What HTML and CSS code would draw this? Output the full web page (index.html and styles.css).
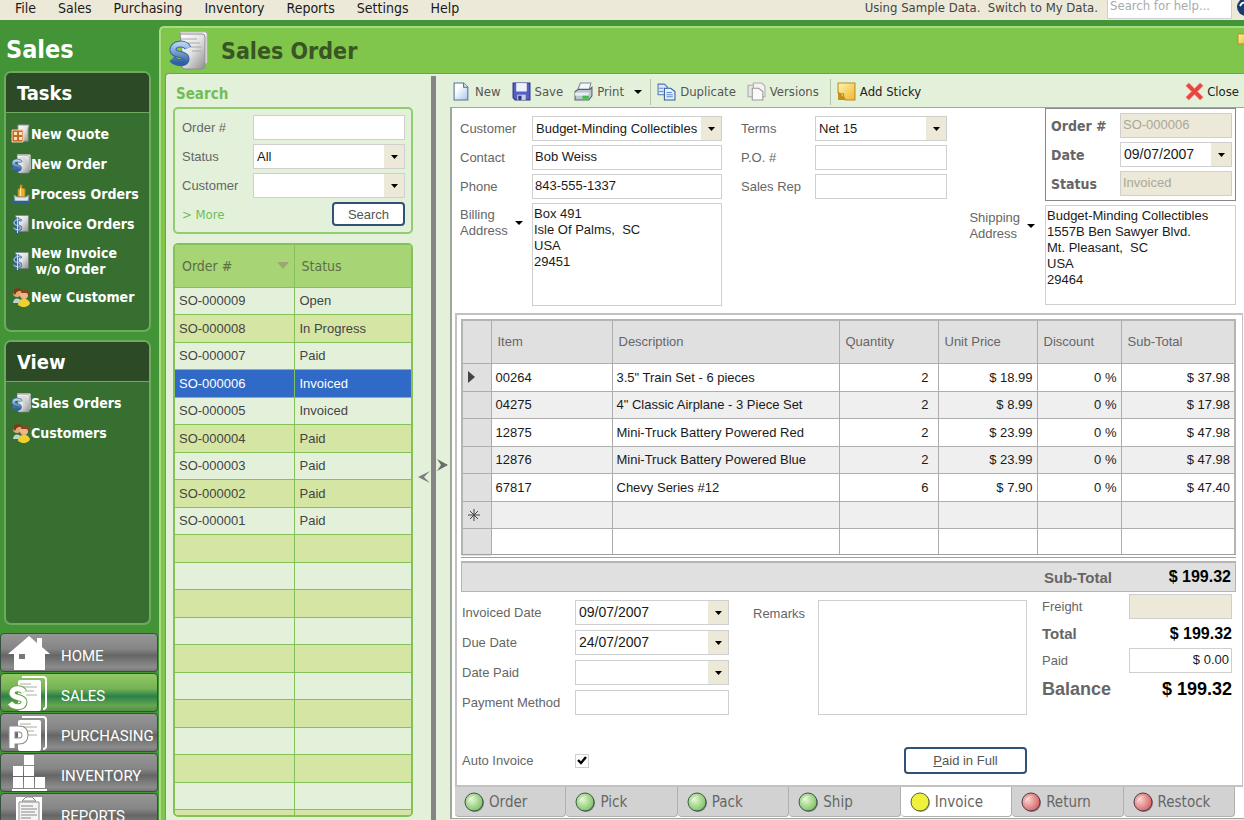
FILE: index.html
```html
<!DOCTYPE html>
<html lang="en">
    <head>
        <meta charset="utf-8">
        <title>Sales Order</title>
        <link rel="stylesheet" href="styles.css">
    </head>
    <body>
        <!-- Shared icons -->
        <svg class="defs" width="0" height="0">
            <defs>
                <linearGradient id="gPaper" x1="0" y1="0" x2="1" y2="1">
                    <stop offset="0" stop-color="#ffffff"/><stop offset="0.5" stop-color="#e2e2e2"/><stop offset="1" stop-color="#8d8d8d"/>
                </linearGradient>
                <linearGradient id="gBlue" x1="0" y1="0" x2="0" y2="1">
                    <stop offset="0" stop-color="#b4d0ee"/><stop offset="1" stop-color="#2d5fa4"/>
                </linearGradient>
                <linearGradient id="gSheet" x1="0" y1="0" x2="1" y2="1">
                    <stop offset="0.3" stop-color="#ffffff"/><stop offset="1" stop-color="#a9c4e8"/>
                </linearGradient>
                <linearGradient id="gSticky" x1="0" y1="0" x2="1" y2="1">
                    <stop offset="0" stop-color="#fff6b0"/><stop offset="1" stop-color="#eeb62c"/>
                </linearGradient>
                <radialGradient id="gGreen" cx="0.4" cy="0.4" r="0.6">
                    <stop offset="0" stop-color="#dff5cf"/><stop offset="1" stop-color="#83c468"/>
                </radialGradient>
                <radialGradient id="gRed" cx="0.35" cy="0.4" r="0.65">
                    <stop offset="0" stop-color="#f8cfcf"/><stop offset="1" stop-color="#d86565"/>
                </radialGradient>
                <symbol id="order" viewBox="0 0 40 40">
                    <path d="M12 1h25q2 0 2 2v28q0 2-2 2" fill="#f4f4f4" stroke="#b5b5b5"/>
                    <path d="M12 3h22q3 0 3 3v29q0 3-3 3H17q-3 0-3-3V20z" fill="url(#gPaper)" stroke="#8e8e8e"/>
                    <path d="M13 8h16M15 12h17M22 16h11M24 20h9" stroke="#aaa" stroke-width="1"/>
                    <path d="M20 17C17 11 5 12 5 19c0 6 13 3 13 9 0 5-9 5-14 0" fill="none" stroke="#37669f" stroke-width="7"/>
                    <path d="M20 17C17 11 5 12 5 19c0 6 13 3 13 9 0 5-9 5-14 0" fill="none" stroke="url(#gBlue)" stroke-width="5"/>
                </symbol>
                <symbol id="invoice" viewBox="0 0 40 40">
                    <path d="M9 3h26v32H16z" fill="url(#gPaper)" stroke="#777"/>
                    <path d="M21 14C17 9 6 11 6 18c0 6 14 4 14 10 0 5-9 5-15 0M13 6v32" fill="none" stroke="#3c699f" stroke-width="5"/>
                    <path d="M21 14C17 9 6 11 6 18c0 6 14 4 14 10 0 5-9 5-15 0M13 6v32" fill="none" stroke="#c9dcf0" stroke-width="2"/>
                </symbol>
                <symbol id="quote" viewBox="0 0 20 20">
                    <path d="M7 1h11l-1 4v12H7z" fill="url(#gPaper)" stroke="#999"/>
                    <path d="M1 6h11v12H1z" fill="#c96a22" stroke="#f2d2ad"/>
                    <path d="M3 8h3v3H3zM8 8h3v3H8zM3 13h3v3H3zM8 13h3v3H8z" fill="#fbe3bd"/>
                </symbol>
                <symbol id="process" viewBox="0 0 20 20">
                    <path d="M7 5h2V1h2v3l3 1v8H7z" fill="#eeb028" stroke="#b47c10"/>
                    <path d="M9 4h1v8H9z" fill="#fff0a8"/>
                    <path d="M3 11l3 2h9l3-2-1 6H4z" fill="#dfe6ec" stroke="#8c9aa8"/>
                    <path d="M1 18h18" stroke="#2a5fa8" stroke-width="2"/>
                </symbol>
                <symbol id="people" viewBox="0 0 20 20">
                    <path d="M2 16c0-6 8-6 9 0z" fill="#b3d3df"/>
                    <circle cx="6" cy="6" r="4" fill="#e7a876"/>
                    <path d="M2 6q0-5 5-5 3 0 4 3Q6 3 4 8z" fill="#7a3b16"/>
                    <path d="M7 18c0-8 11-8 12-1q-4 4-8 3z" fill="#f2cf30"/>
                    <circle cx="13" cy="8" r="4" fill="#efb787"/>
                    <path d="M10 6q1-4 5-4 4 1 3 7l-2-3z" fill="#86461d"/>
                </symbol>
                <symbol id="sticky" viewBox="0 0 18 18">
                    <path d="M1 1h16v16H8L1 10z" fill="url(#gSticky)" stroke="#b98d20"/>
                    <path d="M1 10l7 7H1z" fill="#c78f12"/>
                    <path d="M1 10q3 2 5 1 0 4 2 6z" fill="#f6cf4d" stroke="#b98d20"/>
                </symbol>
                <symbol id="green" viewBox="0 0 20 20">
                    <circle cx="11" cy="11" r="9" fill="#7f7f8a"/>
                    <circle cx="10" cy="10" r="9" fill="url(#gGreen)" stroke="#3b5a46" stroke-width="1"/>
                    <path d="M4 11Q5 4 12 4 7 6 4 11z" fill="#fff" opacity="0.7"/>
                </symbol>
                <symbol id="red" viewBox="0 0 20 20">
                    <circle cx="11" cy="11" r="9" fill="#8a8088"/>
                    <circle cx="10" cy="10" r="9" fill="url(#gRed)" stroke="#573445" stroke-width="1"/>
                    <path d="M4 11Q5 4 12 4 7 6 4 11z" fill="#fff" opacity="0.5"/>
                </symbol>
                <symbol id="yellow" viewBox="0 0 20 20">
                    <circle cx="11" cy="11" r="9" fill="#a9a9a0"/>
                    <circle cx="10" cy="10" r="9" fill="#eff23c" stroke="#5d6424" stroke-width="1"/>
                </symbol>
                <symbol id="papers" viewBox="0 0 40 36">
                    <path d="M14 2h21q3 0 3 3v26q0 3-3 3" fill="none" stroke="#fff" stroke-width="2"/>
                    <path d="M10 7q0-2 2-2h19q2 0 2 2v27q0 2-2 2H12q-2 0-2-2z" fill="#fff"/>
                    <path d="M12 9h11M12 12h17M16 16h10M18 20h11" stroke="#a5b09a" stroke-width="1"/>
                </symbol>
            </defs>
        </svg>

        <div class="menubar">
            <nav class="menus">
                <a href="#">File</a>
                <a href="#">Sales</a>
                <a href="#">Purchasing</a>
                <a href="#">Inventory</a>
                <a href="#">Reports</a>
                <a href="#">Settings</a>
                <a href="#">Help</a>
            </nav>
            <a class="sample" href="#">Using Sample Data.&nbsp; Switch to My Data.</a>
            <input class="help" type="text" placeholder="Search for help..." aria-label="Search for help">
            <svg class="helpicon" viewBox="0 0 7 20"><circle cx="9" cy="7" r="9" fill="#173a70"/><path d="M3 6q2-4 4-3" stroke="#fff" stroke-width="2" fill="none"/></svg>
        </div>

        <div class="app">
            <div class="sidebar">
                <h1>Sales</h1>
                <div class="panel tasks">
                    <h2>Tasks</h2>
                    <ul>
                        <li><a href="#"><svg><use href="#quote"/></svg>New Quote</a></li>
                        <li><a href="#"><svg><use href="#order"/></svg>New Order</a></li>
                        <li><a href="#"><svg><use href="#process"/></svg>Process Orders</a></li>
                        <li><a href="#"><svg><use href="#invoice"/></svg>Invoice Orders</a></li>
                        <li class="tall"><a href="#"><svg><use href="#invoice"/></svg><span>New Invoice<br>&nbsp;w/o Order</span></a></li>
                        <li><a href="#"><svg><use href="#people"/></svg>New Customer</a></li>
                    </ul>
                </div>
                <div class="panel view">
                    <h2>View</h2>
                    <ul>
                        <li><a href="#"><svg><use href="#order"/></svg>Sales Orders</a></li>
                        <li><a href="#"><svg><use href="#people"/></svg>Customers</a></li>
                    </ul>
                </div>
                <nav class="modules">
                    <a href="#">
                        <svg viewBox="0 0 42 36"><path d="M21 1l8 7V3h5v9l8 7h-5v16H6V19H0z" fill="#fff"/><path d="M11 19h6v5h-6z" fill="#777"/></svg>
                        HOME
                    </a>
                    <a href="#" class="active">
                        <svg viewBox="0 0 42 36"><use href="#papers" width="40" height="36"/><path d="M16 17C13 12 4 13 4 18c0 6 12 3 12 9 0 6-10 6-14 1" fill="none" stroke="#6ea24c" stroke-width="7"/><path d="M16 17C13 12 4 13 4 18c0 6 12 3 12 9 0 6-10 6-14 1" fill="none" stroke="#fff" stroke-width="5"/></svg>
                        SALES
                    </a>
                    <a href="#">
                        <svg viewBox="0 0 42 36"><use href="#papers" width="40" height="36"/><path d="M4 33V14h7q6 0 6 6t-6 6H4" fill="none" stroke="#8a8a8a" stroke-width="7"/><path d="M4 33V14h7q6 0 6 6t-6 6H4" fill="none" stroke="#fff" stroke-width="5"/></svg>
                        PURCHASING
                    </a>
                    <a href="#">
                        <svg viewBox="0 0 42 36"><path d="M16 0h10v10H16zM5 11h10v10H5zM16 11h10v10H16zM5 22h10v11H5zM16 22h10v11H16zM27 22h10v11H27zM4 34h35v2H4z" fill="#fff"/></svg>
                        INVENTORY
                    </a>
                    <a href="#">
                        <svg viewBox="0 0 42 36"><path d="M8 2h26v34H8z" fill="#fff"/><path d="M11 7h20v29H11z" fill="#f4f4f4" stroke="#909090"/><path d="M14 6h14l-4-4h-6z" fill="#fff" stroke="#888"/><path d="M13 11h12M13 14h16M13 17h14M13 20h16M13 23h10" stroke="#888" stroke-width="1"/></svg>
                        REPORTS
                    </a>
                </nav>
            </div>

            <div class="main">
                <div class="titlebar">
                    <svg class="titleicon"><use href="#order"/></svg>
                    <h1>Sales Order</h1>
                    <svg class="note" viewBox="0 0 7 12"><path d="M1 1h9v10H1z" fill="url(#gSticky)" stroke="#b98d20"/></svg>
                </div>

                <div class="content">
                    <div class="finder">
                        <h3>Search</h3>
                        <form class="search">
                            <label for="s-order">Order #</label>
                            <input type="text" id="s-order">
                            <label for="s-status">Status</label>
                            <select id="s-status"><option>All</option></select>
                            <label for="s-customer">Customer</label>
                            <select id="s-customer"><option></option></select>
                            <a href="#" class="more">&gt; More</a>
                            <button type="button">Search</button>
                        </form>
                        <div class="listbox">
                            <table class="orders">
                                <thead>
                                    <tr><th class="num"><span>Order #<svg viewBox="0 0 12 7"><path d="M0 0h12L6 7z" fill="#9aa877"/></svg></span></th><th>Status</th></tr>
                                </thead>
                                <tbody>
                                    <tr><td>SO-000009</td><td>Open</td></tr>
                                    <tr><td>SO-000008</td><td>In Progress</td></tr>
                                    <tr><td>SO-000007</td><td>Paid</td></tr>
                                    <tr class="selected"><td>SO-000006</td><td>Invoiced</td></tr>
                                    <tr><td>SO-000005</td><td>Invoiced</td></tr>
                                    <tr><td>SO-000004</td><td>Paid</td></tr>
                                    <tr><td>SO-000003</td><td>Paid</td></tr>
                                    <tr><td>SO-000002</td><td>Paid</td></tr>
                                    <tr><td>SO-000001</td><td>Paid</td></tr>
                                    <tr><td></td><td></td></tr>
                                    <tr><td></td><td></td></tr>
                                    <tr><td></td><td></td></tr>
                                    <tr><td></td><td></td></tr>
                                    <tr><td></td><td></td></tr>
                                    <tr><td></td><td></td></tr>
                                    <tr><td></td><td></td></tr>
                                    <tr><td></td><td></td></tr>
                                    <tr><td></td><td></td></tr>
                                    <tr><td></td><td></td></tr>
                                    <tr><td></td><td></td></tr>
                                </tbody>
                            </table>
                        </div>
                    </div>

                    <div class="splitter">
                        <svg viewBox="0 0 32 26"><path d="M20 1l11 6-11 6 4-6z" fill="#6c6c6c"/><path d="M13 13L1 19l12 6-6-6z" fill="#7c7c7c"/></svg>
                    </div>

                    <div class="document">
                        <div class="toolbar">
                            <button type="button"><svg viewBox="0 0 18 18"><path d="M2 1h9l4 4v12H2z" fill="url(#gSheet)" stroke="#4f6f9d"/><path d="M11 1v4h4" fill="#dde8f5" stroke="#4f6f9d"/></svg>New</button>
                            <button type="button"><svg viewBox="0 0 18 18"><path d="M1 1h16v16H3l-2-2z" fill="#5560c4" stroke="#2c3480"/><path d="M4 1h10v8H4z" fill="#eef2fb"/><path d="M5 12h8v5H5z" fill="#c9cde0"/><path d="M6 13h3v4H6z" fill="#2c3480"/></svg>Save</button>
                            <button type="button"><svg viewBox="0 0 18 18"><path d="M6 1h10l-2 8H3z" fill="#f4f8fc" stroke="#7d8b9a"/><path d="M1 9l3-2h11l2-2v8l-3 4H1z" fill="#bcc6cf" stroke="#56626d"/><path d="M1 10h13v3H1z" fill="#e9eef2"/><path d="M8 13h6v3H8z" fill="#3fc04c"/></svg>Print<i class="caret"></i></button>
                            <span class="sep"></span>
                            <button type="button"><svg viewBox="0 0 18 18"><path d="M1 2h6l3 3v7H1z" fill="#dceafa" stroke="#4f79b5"/><path d="M7 6h6l4 3v8H7z" fill="#e6f0fc" stroke="#2f5da3"/><path d="M2 6h4M2 9h4M9 10h5M9 12h6M9 14h6" stroke="#5c8acb"/></svg>Duplicate</button>
                            <button type="button"><svg viewBox="0 0 18 18"><path d="M1 3h7v11H1z" fill="#e6e6e6" stroke="#aaa"/><path d="M6 1h8l3 3v10H6z" fill="#f3f3f3" stroke="#aaa"/><path d="M5 6h6l4 3v8H5z" fill="#fafafa" stroke="#999"/></svg>Versions</button>
                            <span class="sep"></span>
                            <button type="button" class="dark"><svg><use href="#sticky"/></svg>Add Sticky</button>
                            <button type="button" class="dark close"><svg viewBox="0 0 20 20"><path d="M1 4l3-3 6 6 6-6 3 3-6 6 6 6-3 3-6-6-6 6-3-3 6-6z" fill="#e8453c" stroke="#f08a84"/></svg>Close</button>
                        </div>

                        <form class="sheet">
                            <div class="header">
                                <div class="fields customer">
                                    <label for="customer">Customer</label>
                                    <select id="customer"><option>Budget-Minding Collectibles</option></select>
                                    <label for="contact">Contact</label>
                                    <input type="text" id="contact" value="Bob Weiss">
                                    <label for="phone">Phone</label>
                                    <input type="text" id="phone" value="843-555-1337">
                                    <div class="addr">
                                        <label for="billing">Billing<br>Address</label><i class="caret"></i>
                                    </div>
                                    <textarea id="billing">Box 491
Isle Of Palms,  SC
USA
29451</textarea>
                                </div>
                                <div class="fields terms">
                                    <label for="terms">Terms</label>
                                    <select id="terms"><option>Net 15</option></select>
                                    <label for="po">P.O. #</label>
                                    <input type="text" id="po">
                                    <label for="rep">Sales Rep</label>
                                    <input type="text" id="rep">
                                </div>
                                <div class="addr shipto">
                                    <label for="shipping">Shipping<br>Address</label><i class="caret"></i>
                                </div>
                                <div class="summary">
                                    <div class="fields order">
                                        <label for="order-no">Order #</label>
                                        <input type="text" id="order-no" value="SO-000006" disabled>
                                        <label for="date">Date</label>
                                        <select id="date" class="date"><option>09/07/2007</option></select>
                                        <label for="status">Status</label>
                                        <input type="text" id="status" value="Invoiced" disabled>
                                    </div>
                                    <textarea id="shipping">Budget-Minding Collectibles
1557B Ben Sawyer Blvd.
Mt. Pleasant,  SC
USA
29464</textarea>
                                </div>
                            </div>

                            <div class="page">
                                <table class="items">
                                    <colgroup><col class="c-mark"><col class="c-item"><col><col class="c-qty"><col class="c-qty"><col class="c-disc"><col class="c-sub"></colgroup>
                                    <thead>
                                        <tr><th></th><th>Item</th><th>Description</th><th>Quantity</th><th>Unit Price</th><th>Discount</th><th>Sub-Total</th></tr>
                                    </thead>
                                    <tbody>
                                        <tr><th><svg viewBox="0 0 7 12"><path d="M0 0l7 6-7 6z" fill="#444"/></svg></th><td>00264</td><td>3.5" Train Set - 6 pieces</td><td>2</td><td>$ 18.99</td><td>0 %</td><td>$ 37.98</td></tr>
                                        <tr><th></th><td>04275</td><td>4" Classic Airplane - 3 Piece Set</td><td>2</td><td>$ 8.99</td><td>0 %</td><td>$ 17.98</td></tr>
                                        <tr><th></th><td>12875</td><td>Mini-Truck Battery Powered Red</td><td>2</td><td>$ 23.99</td><td>0 %</td><td>$ 47.98</td></tr>
                                        <tr><th></th><td>12876</td><td>Mini-Truck Battery Powered Blue</td><td>2</td><td>$ 23.99</td><td>0 %</td><td>$ 47.98</td></tr>
                                        <tr><th></th><td>67817</td><td>Chevy Series #12</td><td>6</td><td>$ 7.90</td><td>0 %</td><td>$ 47.40</td></tr>
                                        <tr><th><svg class="star" viewBox="0 0 12 12"><path d="M6 0v12M0 6h12M2 2l8 8M10 2l-8 8" stroke="#444"/></svg></th><td></td><td></td><td></td><td></td><td></td><td></td></tr>
                                        <tr><th></th><td></td><td></td><td></td><td></td><td></td><td></td></tr>
                                    </tbody>
                                </table>
                                <div class="subtotal"><b>Sub-Total</b><output>$ 199.32</output></div>

                                <div class="footer">
                                    <div class="fields dates">
                                        <label for="inv-date">Invoiced Date</label>
                                        <select id="inv-date" class="date"><option>09/07/2007</option></select>
                                        <label for="due-date">Due Date</label>
                                        <select id="due-date" class="date"><option>24/07/2007</option></select>
                                        <label for="paid-date">Date Paid</label>
                                        <select id="paid-date" class="date"><option></option></select>
                                        <label for="method">Payment Method</label>
                                        <input type="text" id="method">
                                    </div>
                                    <label class="remarks" for="remarks">Remarks</label>
                                    <textarea id="remarks"></textarea>
                                    <div class="totals">
                                        <label for="freight">Freight</label>
                                        <input type="text" id="freight" disabled>
                                        <b>Total</b>
                                        <output>$ 199.32</output>
                                        <label for="paid">Paid</label>
                                        <input type="text" id="paid" value="$ 0.00">
                                        <b class="balance">Balance</b>
                                        <output class="balance">$ 199.32</output>
                                    </div>
                                </div>
                                <div class="actions">
                                    <label for="auto">Auto Invoice</label>
                                    <input type="checkbox" id="auto" checked>
                                    <button type="button"><u>P</u>aid in Full</button>
                                </div>
                            </div>

                            <nav class="tabs">
                                <a href="#"><svg><use href="#green"/></svg>Order</a>
                                <a href="#"><svg><use href="#green"/></svg>Pick</a>
                                <a href="#"><svg><use href="#green"/></svg>Pack</a>
                                <a href="#"><svg><use href="#green"/></svg>Ship</a>
                                <a href="#" class="active"><svg><use href="#yellow"/></svg>Invoice</a>
                                <a href="#"><svg><use href="#red"/></svg>Return</a>
                                <a href="#"><svg><use href="#red"/></svg>Restock</a>
                            </nav>
                        </form>
                    </div>
                </div>
            </div>
        </div>
    </body>
</html>
```
FILE: styles.css
```css
* {
    box-sizing: border-box;
}
body {
    margin: 0;
    height: 100vh;
    overflow: hidden;
    display: flex;
    flex-direction: column;
    background-color: #429436;
    font-family: "Liberation Sans", Arial, sans-serif;
    font-size: 13px;
    color: #1a1a1a;
}
a {
    color: inherit;
    text-decoration: none;
}
svg {
    display: block;
    flex: none;
}
.defs {
    position: absolute;
}
h1, h2, h3, ul {
    margin: 0;
    padding: 0;
}
h1, h2, h3, .menubar, .panel, .toolbar button, .tabs, .more, .orders th, .order label {
    font-family: "DejaVu Sans Condensed", Tahoma, "Noto Sans", sans-serif;
}

/* form controls */
input, select, textarea {
    width: 100%;
    height: 25px;
    margin: 0;
    padding: 0 2px 3px 2px;
    border: 1px solid #cfcfcf;
    border-radius: 0;
    background-color: white;
    font-family: inherit;
    font-size: 13px;
    color: #1a1a1a;
    outline: none;
}
select {
    appearance: none;
    padding: 0 3px 1px;
    background-image: url("data:image/svg+xml,%3Csvg xmlns='http://www.w3.org/2000/svg' width='20' height='23'%3E%3Crect width='20' height='23' fill='%23ece9d8'/%3E%3Cpath d='M7 10h7l-3.5 4z'/%3E%3C/svg%3E");
    background-repeat: no-repeat;
    background-position: right center;
}
.date {
    font-size: 14px;
}
input:disabled {
    background-color: #ece9d8;
    color: #aaa798;
}
textarea {
    display: block;
    resize: none;
    overflow: hidden;
    padding: 2px 1px;
    line-height: 16px;
}
form button {
    border: 2px solid #2f5275;
    border-radius: 4px;
    background-color: white;
    font-family: inherit;
    font-size: 13px;
    color: #555;
    padding: 0;
}
label {
    color: #666;
}
.caret {
    border: 4px solid transparent;
    border-top-color: black;
    border-bottom: 0;
}

/* top menu */
.menubar {
    display: flex;
    align-items: flex-start;
    height: 20px;
    flex: none;
    background-color: #ece9d8;
    line-height: 16px;
}
.menus {
    display: flex;
    gap: 22px;
    padding-left: 15px;
    margin-right: auto;
    font-size: 14px;
}
.sample {
    color: #444;
    margin-right: 9px;
}
.help {
    width: 125px;
    height: 19px;
    border-top: 0;
    padding-bottom: 7px;
}
.help::placeholder {
    color: #aaa;
}
.helpicon {
    width: 7px;
    height: 20px;
    margin-left: 5px;
}

.app {
    display: flex;
    flex: 1;
    min-height: 0;
}

/* sidebar */
.sidebar {
    width: 159px;
    flex: none;
    color: white;
}
.sidebar h1 {
    font-size: 25px;
    line-height: 30px;
    padding: 15px 0 6px 6px;
}
.panel {
    margin: 0 8px 8px 4px;
    border: 2px solid #6dab5f;
    border-radius: 7px;
    background-color: #376f31;
    overflow: hidden;
    font-weight: bold;
    font-size: 14px;
    line-height: 16px;
}
.tasks {
    height: 261px;
}
.view {
    height: 285px;
}
.panel h2 {
    height: 40px;
    padding-left: 11px;
    background-color: #2b4a25;
    border-bottom: 1px solid #6dab5f;
    font-size: 20px;
    line-height: 40px;
}
.panel ul {
    list-style: none;
    padding: 6px 0 0 5px;
}
.panel a {
    display: flex;
    align-items: center;
    height: 30px;
    white-space: nowrap;
}
.panel .tall a {
    height: 43px;
}
.panel svg {
    width: 20px;
    height: 20px;
}
.modules {
    display: flex;
    flex-direction: column;
    gap: 1px;
}
.modules a {
    display: flex;
    align-items: flex-end;
    gap: 11px;
    height: 39px;
    margin-right: 1px;
    padding: 0 0 0 7px;
    border: 1px solid #35503f;
    border-radius: 4px;
    background: linear-gradient(#969696, #858585 40%, #666 58%, #8c8c8c 90%, #777);
    font-family: Roboto, "Liberation Sans", sans-serif;
    font-size: 15px;
    line-height: 30px;
    white-space: nowrap;
}
.modules .active {
    background: linear-gradient(#94c864, #74b254 40%, #2b8049 60%, #66a650 85%, #558f44);
}
.modules svg {
    width: 42px;
    height: 36px;
}

/* main area */
.main {
    flex: 1;
    min-width: 0;
    display: flex;
    flex-direction: column;
    margin-top: 6px;
    border: solid #a9dc82;
    border-width: 2px 0 0 2px;
    border-radius: 5px 0 0 0;
    background-color: #80c64b;
}
.titlebar {
    display: flex;
    align-items: center;
    height: 45px;
    flex: none;
    padding-left: 7px;
}
.titlebar h1 {
    margin-left: 13px;
    margin-right: auto;
    font-size: 23px;
    color: #3a5524;
}
.titleicon {
    width: 40px;
    height: 40px;
}
.note {
    width: 7px;
    height: 12px;
    align-self: flex-start;
    margin-top: 5px;
}
.content {
    flex: 1;
    min-height: 0;
    display: flex;
    margin-left: 4px;
    border: 1px solid #7c9470;
    border-width: 1px 0 0 1px;
    border-radius: 4px 0 0 0;
    background-color: #e4f1da;
}

/* search and order list */
.finder {
    width: 265px;
    flex: none;
    display: flex;
    flex-direction: column;
    padding: 12px 18px 3px 7px;
}
.finder h3 {
    padding: 0 0 4px 3px;
    font-size: 15px;
    line-height: 17px;
    color: #70bd58;
}
.search {
    display: grid;
    grid-template-columns: 72px 152px;
    row-gap: 4px;
    align-items: center;
    padding: 6px;
    border: 2px solid #90cc70;
    border-radius: 5px;
    margin-bottom: 9px;
}
.search label {
    padding-left: 1px;
}
.more {
    padding-left: 1px;
    color: #70bd58;
}
.search button {
    justify-self: end;
    width: 73px;
    height: 24px;
}
.listbox {
    flex: 1;
    min-height: 0;
    overflow: hidden;
    border: 2px solid #84c158;
    border-radius: 5px;
}
table {
    width: 100%;
    border-collapse: collapse;
    table-layout: fixed;
}
td, th {
    padding: 0;
    text-align: left;
}
tbody tr {
    height: 27px;
}
tbody tr:nth-child(even) {
    height: 28px;
}
.orders th {
    height: 42px;
    padding-left: 7px;
    background-color: #a7d575;
    border-bottom: 1px solid #84c158;
    font-size: 14px;
    font-weight: normal;
    color: #5c6e48;
}
.orders th.num {
    width: 119px;
}
.orders th span {
    display: flex;
    align-items: center;
    justify-content: space-between;
}
.orders th svg {
    width: 12px;
    height: 7px;
    margin-right: 5px;
}
.orders tr > :first-child {
    border-right: 1px solid #84c158;
}
.orders td {
    padding-left: 5px;
    border-bottom: 1px solid #84c158;
    color: #444;
}
.orders tr > td:first-child {
    padding-left: 4px;
}
.orders tbody tr:nth-child(even) {
    background-color: #d5e5a3;
}
.orders tbody tr.selected:nth-child(n) {
    background-color: #3169c6;
}
.orders .selected td {
    color: white;
}

.splitter {
    position: relative;
    width: 5px;
    flex: none;
    margin-top: 2px;
    background-color: #858585;
}
.splitter svg {
    position: absolute;
    left: -14px;
    top: 382px;
    width: 32px;
    height: 26px;
}

/* document */
.document {
    flex: 1;
    min-width: 0;
    display: flex;
    flex-direction: column;
    padding-left: 14px;
}
.toolbar {
    display: flex;
    align-items: center;
    height: 33px;
    flex: none;
    padding: 2px 5px 0 2px;
}
.toolbar button {
    display: flex;
    align-items: center;
    gap: 4px;
    margin-right: 11px;
    padding: 0;
    border: 0;
    background: none;
    font-size: 13px;
    color: #555;
}
.toolbar svg {
    width: 19px;
    height: 19px;
}
.toolbar .dark {
    color: #222;
}
.toolbar .close {
    margin-left: auto;
    margin-right: 0;
    gap: 3px;
}
.toolbar .caret {
    margin-left: 6px;
}
.toolbar button:has(.caret) {
    margin-right: 8px;
}
.sep {
    width: 1px;
    height: 26px;
    margin-right: 6px;
    background-color: #b9c4ad;
}
.sheet {
    flex: 1;
    display: flex;
    flex-direction: column;
    margin-bottom: 1px;
    padding-left: 3px;
    border: solid #9ea79a;
    border-width: 1px 0 1px 2px;
    background-color: white;
}
.header {
    display: flex;
    align-items: flex-start;
    padding: 8px 8px 7px 5px;
}
.fields {
    display: grid;
    row-gap: 4px;
    align-items: center;
}
.customer {
    grid-template-columns: 72px 190px;
}
.customer textarea {
    height: 103px;
}
.terms {
    grid-template-columns: 74px 132px;
    margin-left: 19px;
}
.addr {
    display: flex;
    align-self: start;
    align-items: center;
    gap: 7px;
    padding-top: 4px;
    line-height: 16px;
}
.shipto {
    margin-left: auto;
    margin-right: 10px;
    padding-top: 94px;
}
.summary {
    width: 191px;
    margin-top: -8px;
}
.order {
    grid-template-columns: 71px 1fr;
    margin: 0 0 4px;
    padding: 4px 3px;
    border: 1px solid #888;
}
.order label {
    padding-left: 2px;
    font-size: 14px;
    font-weight: bold;
}
.summary textarea {
    height: 100px;
}

/* invoice page */
.page {
    flex: 1;
    margin-right: 1px;
    padding: 4px 6px 0 4px;
    border: 2px solid #c2c2c2;
    border-right-width: 1px;
}
.c-mark { width: 29px; }
.c-item { width: 121px; }
.c-qty { width: 99px; }
.c-disc { width: 84px; }
.c-sub { width: 114px; }
.items {
    border: 2px solid #b4b4b4;
    border-bottom: 4px double #a0a0a0;
}
.items th, .items td {
    border: 1px solid #adadad;
}
.items th {
    background-color: #e0e0e0;
    font-weight: normal;
    color: #666;
}
.items thead th {
    height: 43px;
    padding-left: 6px;
}
.items tbody th {
    padding-left: 5px;
}
.items tbody tr {
    height: 28px;
}
.items tbody tr:nth-child(even) {
    height: 27px;
    background-color: #efefef;
}
.items td {
    padding: 0 4px;
    text-align: right;
}
.items td:nth-child(2), .items td:nth-child(3) {
    text-align: left;
}
.items td:nth-child(4) {
    padding-right: 9px;
}
.items svg {
    width: 7px;
    height: 12px;
}
.items .star {
    width: 12px;
}
.subtotal {
    display: flex;
    justify-content: space-between;
    align-items: center;
    height: 31px;
    margin-top: 3px;
    padding: 0 4px 0 calc(100% - 193px);
    border: 1px solid #b4b4b4;
    border-top-width: 2px;
    background-color: #e0e0e0;
    font-size: 15px;
}
b {
    color: #666;
}
output {
    font-size: 16px;
    font-weight: bold;
    text-align: right;
    color: black;
}
.footer {
    display: flex;
    align-items: flex-start;
    padding: 8px 4px 0 1px;
}
.dates {
    grid-template-columns: 113px 154px;
    row-gap: 5px;
}
.remarks {
    margin-left: 24px;
    padding-top: 6px;
    width: 65px;
}
#remarks {
    width: auto;
    flex: 1;
    height: 115px;
}
.totals {
    display: grid;
    grid-template-columns: 87px 103px;
    grid-template-rows: 25px 29px 25px 33px;
    align-items: center;
    width: 190px;
    margin: -6px 0 0 15px;
    font-size: 15px;
}
.totals label {
    font-size: 13px;
}
.totals .balance {
    font-size: 18px;
}
#paid {
    text-align: right;
}
.actions {
    display: flex;
    align-items: center;
    padding: 32px 209px 0 1px;
}
.actions label {
    width: 113px;
}
.actions input {
    appearance: none;
    width: 14px;
    height: 14px;
    padding: 0;
    background: url("data:image/svg+xml,%3Csvg xmlns='http://www.w3.org/2000/svg' width='10' height='10'%3E%3Cpath d='M1 4l3 3 5-6' fill='none' stroke='black' stroke-width='2.4'/%3E%3C/svg%3E") center no-repeat;
}
.actions button {
    width: 123px;
    height: 27px;
    margin-left: auto;
}

/* stage tabs */
.tabs {
    display: grid;
    grid-template-columns: repeat(7, 1fr);
    height: 31px;
    flex: none;
    padding: 0 9px 1px 0;
}
.tabs a {
    display: flex;
    align-items: center;
    gap: 5px;
    padding-left: 9px;
    border: 1px solid #b0b0b0;
    border-width: 0 1px 1px 0;
    border-radius: 0 0 4px 4px;
    background-color: #d2d2d2;
    font-size: 15px;
    color: #666;
}
.tabs .active {
    background-color: white;
}
.tabs svg {
    width: 20px;
    height: 20px;
}
```
